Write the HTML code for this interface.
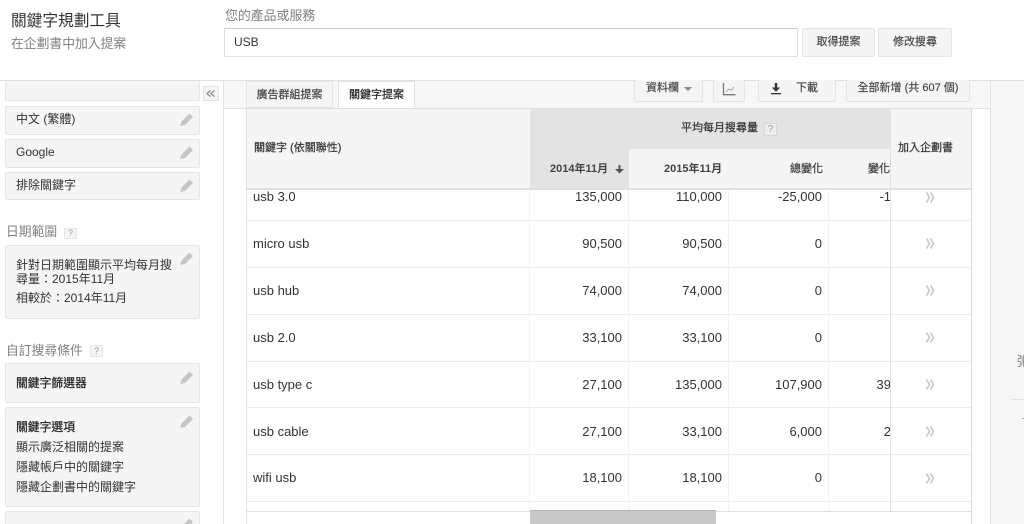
<!DOCTYPE html>
<html><head><meta charset="utf-8">
<style>
html,body{margin:0;padding:0;width:1024px;height:524px;overflow:hidden;background:#fff}
#w{position:relative;width:1024px;height:524px;overflow:hidden;font-family:"Liberation Sans","Noto Sans CJK TC",sans-serif;color:#333;font-size:12px;filter:blur(.35px)}
#w div{position:absolute;box-sizing:border-box;white-space:nowrap}
.card{left:5px;width:195px;background:#f5f5f5;border:1px solid #e6e6e6;border-radius:2px}
.t{line-height:16px}
.btn{background:#f5f5f5;border:1px solid #e4e4e4;border-radius:2px;text-align:center;color:#444;font-size:11px;-webkit-text-stroke:.15px #444}
.tb{top:80px;height:22px;border-top:0;line-height:17px}
.hl{height:1px;left:247px;width:724px;background:#ececec}
.vl{width:1px;background:#f2f2f2}
.n{text-align:right;font-size:13px;line-height:16px;color:#333}
.k{left:253px;font-size:13px;line-height:16px;color:#333}
.h{font-size:11px;line-height:14px;color:#333;-webkit-text-stroke:.2px #333}
svg{position:absolute}
</style></head><body><div id="w">

<div class="t" style="left:11px;top:12px;font-size:15.700px;line-height:20px;color:#333">關鍵字規劃工具</div>
<div class="t" style="left:11px;top:36px;font-size:12.800px;color:#808080">在企劃書中加入提案</div>
<div class="t" style="left:225px;top:8px;font-size:12.900px;color:#808080">您的產品或服務</div>
<div style="left:224px;top:28px;width:574px;height:29px;border:1px solid #dedede;border-top-color:#cdcdcd;font-size:12px;line-height:27px;padding-left:9px;color:#333">USB</div>
<div class="btn" style="left:802px;top:28px;width:73px;height:29px;line-height:27px">取得提案</div>
<div class="btn" style="left:878px;top:28px;width:74px;height:29px;line-height:27px">修改搜尋</div>

<div style="left:0;top:80px;width:1024px;height:1px;background:#e0e0e0"></div>

<div class="card" style="top:81px;height:20px;border-top:0"></div>
<div class="card t" style="top:106px;height:29px;line-height:24px;padding-left:10px">中文 (繁體)</div>
<div class="card t" style="top:139px;height:29px;line-height:24px;padding-left:10px">Google</div>
<div class="card t" style="top:172px;height:28px;line-height:24px;padding-left:10px">排除關鍵字</div>

<div class="t" style="left:6px;top:224px;font-size:12.800px;color:#808080">日期範圍</div>
<div style="left:64px;top:228px;width:13px;height:11px;background:#f5f5f5;border:1px solid #e6e6e6;font-size:9px;line-height:9px;text-align:center;color:#999">?</div>
<div class="card" style="top:245px;height:74px"></div>
<div class="t" style="left:16px;top:258px;font-size:12px;line-height:14px;color:#333">針對日期範圍顯示平均每月搜<br>尋量：2015年11月</div>
<div class="t" style="left:16px;top:291px;font-size:12px;line-height:14px;color:#333">相較於：2014年11月</div>

<div class="t" style="left:6px;top:343px;font-size:12.800px;color:#808080">自訂搜尋條件</div>
<div style="left:90px;top:345px;width:13px;height:12px;background:#f5f5f5;border:1px solid #e6e6e6;font-size:9px;line-height:10px;text-align:center;color:#999">?</div>
<div class="card" style="top:363px;height:40px"></div>
<div class="t" style="left:16px;top:375px;font-size:11.800px;color:#222;-webkit-text-stroke:.2px #222">關鍵字篩選器</div>
<div class="card" style="top:407px;height:100px"></div>
<div class="t" style="left:16px;top:419px;font-size:11.800px;color:#222;-webkit-text-stroke:.2px #222">關鍵字選項</div>
<div class="t" style="left:16px;top:439px">顯示廣泛相關的提案</div>
<div class="t" style="left:16px;top:459px">隱藏帳戶中的關鍵字</div>
<div class="t" style="left:16px;top:479px">隱藏企劃書中的關鍵字</div>
<div class="card" style="top:511px;height:20px"></div>

<svg width="200" height="535" style="left:0;top:0" fill="#c6c6c6">
<path d="M180 126l1.500-4.500 8-8 3.500 3.500-8 8z"/>
<path d="M180 159l1.500-4.500 8-8 3.500 3.500-8 8z"/>
<path d="M180 192l1.500-4.500 8-8 3.500 3.500-8 8z"/>
<path d="M180 265l1.500-4.500 8-8 3.500 3.500-8 8z"/>
<path d="M180 384l1.500-4.500 8-8 3.500 3.500-8 8z"/>
<path d="M180 428l1.500-4.500 8-8 3.500 3.500-8 8z"/>
<path d="M180 531l1.500-4.500 8-8 3.500 3.500-8 8z"/>
</svg>

<div style="left:203px;top:86px;width:16px;height:15px;background:#f5f5f5;border:1px solid #e2e2e2"></div>
<svg width="10" height="8" style="left:206px;top:90px" fill="none" stroke="#888" stroke-width="1.200"><path d="M4.500 .5L1 3.500l3.500 3M8.500 .5L5 3.500l3.500 3"/></svg>
<div style="left:223px;top:81px;width:1px;height:443px;background:#e3e3e3"></div>

<div style="left:990px;top:81px;width:34px;height:443px;background:#f6f6f6;border-left:1px solid #e4e4e4"></div>
<div style="left:1017px;top:354px;font-size:13px;color:#888;line-height:16px">粥</div>
<div style="left:1011px;top:399px;width:13px;height:1px;background:#e2e2e2"></div>
<div style="left:1022px;top:418px;width:2px;height:1px;background:#aaa"></div>

<div style="left:224px;top:81px;width:766px;height:28px;background:#f7f7f7;border-bottom:1px solid #e2e2e2"></div>
<div style="left:246px;top:81px;width:87px;height:27px;background:#f5f5f5;border:1px solid #e4e4e4;text-align:center;line-height:27px;font-size:11px;color:#444;-webkit-text-stroke:.2px #444">廣告群組提案</div>
<div style="left:338px;top:81px;width:77px;height:28px;background:#fff;border:1px solid #e2e2e2;border-bottom:0;text-align:center;line-height:27px;font-size:11px;color:#222;-webkit-text-stroke:.2px #222">關鍵字提案</div>

<div class="btn tb" style="left:634px;width:69px;text-align:left;padding-left:11px">資料欄</div>
<div style="left:684px;top:87px;width:0;height:0;border:4px solid transparent;border-top:4px solid #888"></div>
<div class="btn tb" style="left:713px;width:32px"></div>
<svg width="16" height="16" style="left:722px;top:82px" fill="none"><path d="M1.500 1v11.700h12" stroke="#777" stroke-width="1.300"/><path d="M4 10l3-3 2 1.500 3-3.500" stroke="#aaa"/></svg>
<div class="btn tb" style="left:758px;width:78px;padding-left:20px">下載</div>
<svg width="14" height="14" style="left:770px;top:83px" fill="#333"><path d="M4.800 0h2.400v4.500h3l-4.200 4.300-4.200-4.300h3z"/><rect x="1" y="10" width="10" height="1.300"/></svg>
<div class="btn tb" style="left:846px;width:124px">全部新增 (共 607 個)</div>

<div style="left:246px;top:108px;width:726px;height:416px;background:#fff"></div>
<div style="left:246px;top:108px;width:1px;height:416px;background:#e2e2e2"></div>
<div style="left:971px;top:108px;width:1px;height:416px;background:#d8d8d8"></div>

<div class="hl" style="top:220px"></div><div class="hl" style="top:267px"></div><div class="hl" style="top:314px"></div><div class="hl" style="top:361px"></div><div class="hl" style="top:407px"></div><div class="hl" style="top:454px"></div><div class="hl" style="top:501px"></div>
<div class="vl" style="left:529px;top:190px;height:321px"></div>
<div class="vl" style="left:628px;top:190px;height:321px"></div>
<div class="vl" style="left:728px;top:190px;height:321px"></div>
<div class="vl" style="left:828px;top:190px;height:321px"></div>

<div class="k" style="top:189px">usb 3.0</div>
<div class="n" style="left:530px;width:92px;top:189px">135,000</div><div class="n" style="left:630px;width:92px;top:189px">110,000</div><div class="n" style="left:730px;width:92px;top:189px">-25,000</div><div class="n" style="left:830px;width:61px;top:189px">-1</div>
<div class="k" style="top:236px">micro usb</div>
<div class="n" style="left:530px;width:92px;top:236px">90,500</div><div class="n" style="left:630px;width:92px;top:236px">90,500</div><div class="n" style="left:730px;width:92px;top:236px">0</div>
<div class="k" style="top:283px">usb hub</div>
<div class="n" style="left:530px;width:92px;top:283px">74,000</div><div class="n" style="left:630px;width:92px;top:283px">74,000</div><div class="n" style="left:730px;width:92px;top:283px">0</div>
<div class="k" style="top:330px">usb 2.0</div>
<div class="n" style="left:530px;width:92px;top:330px">33,100</div><div class="n" style="left:630px;width:92px;top:330px">33,100</div><div class="n" style="left:730px;width:92px;top:330px">0</div>
<div class="k" style="top:377px">usb type c</div>
<div class="n" style="left:530px;width:92px;top:377px">27,100</div><div class="n" style="left:630px;width:92px;top:377px">135,000</div><div class="n" style="left:730px;width:92px;top:377px">107,900</div><div class="n" style="left:830px;width:61px;top:377px">39</div>
<div class="k" style="top:424px">usb cable</div>
<div class="n" style="left:530px;width:92px;top:424px">27,100</div><div class="n" style="left:630px;width:92px;top:424px">33,100</div><div class="n" style="left:730px;width:92px;top:424px">6,000</div><div class="n" style="left:830px;width:61px;top:424px">2</div>
<div class="k" style="top:470px">wifi usb</div>
<div class="n" style="left:530px;width:92px;top:470px">18,100</div><div class="n" style="left:630px;width:92px;top:470px">18,100</div><div class="n" style="left:730px;width:92px;top:470px">0</div>

<svg width="12" height="330" style="left:925px;top:190px" fill="none" stroke="#cccccc" stroke-width="1.800">
<path d="M1.500 2.500l3 5-3 5M5.500 2.500l3 5-3 5"/>
<path d="M1.500 48.500l3 5-3 5M5.500 48.500l3 5-3 5"/>
<path d="M1.500 95.500l3 5-3 5M5.500 95.500l3 5-3 5"/>
<path d="M1.500 142.500l3 5-3 5M5.500 142.500l3 5-3 5"/>
<path d="M1.500 189.500l3 5-3 5M5.500 189.500l3 5-3 5"/>
<path d="M1.500 236.500l3 5-3 5M5.500 236.500l3 5-3 5"/>
<path d="M1.500 283.500l3 5-3 5M5.500 283.500l3 5-3 5"/>
</svg>

<div style="left:890px;top:190px;width:1px;height:321px;background:#e0e0e0"></div>

<div style="left:247px;top:108px;width:724px;height:82px;background:#f5f5f5;border-bottom:2px solid #e0e0e0"></div>
<div style="left:530px;top:108px;width:360px;height:41px;background:#e3e3e3"></div>
<div style="left:530px;top:149px;width:99px;height:39px;background:#e3e3e3"></div>
<div style="left:890px;top:108px;width:1px;height:82px;background:#e2e2e2"></div>
<div style="left:246px;top:108px;width:726px;height:1px;background:#dedede"></div>
<div class="h" style="left:254px;top:141px">關鍵字 (依關聯性)</div>
<div class="h" style="left:681px;top:121px">平均每月搜尋量</div>
<div style="left:764px;top:123px;width:13px;height:13px;background:#eee;border:1px solid #d8d8d8;font-size:10px;line-height:11px;text-align:center;color:#999">?</div>
<div class="h" style="left:550px;top:162px;font-weight:bold;color:#444;-webkit-text-stroke:0">2014年11月</div>
<svg width="10" height="10" style="left:615px;top:165px" fill="#555"><path d="M3.500 0h2v4h3.500l-4.500 4.500-4.500-4.500h3.500z"/></svg>
<div class="h" style="left:664px;top:162px;font-weight:bold;color:#444;-webkit-text-stroke:0">2015年11月</div>
<div class="h" style="left:790px;top:162px;color:#444">總變化</div>
<div class="h" style="left:868px;top:162px;width:23px;overflow:hidden;color:#444">變化百</div>
<div class="h" style="left:898px;top:141px">加入企劃書</div>

<div style="left:247px;top:511px;width:724px;height:1px;background:#dedede"></div>
<div style="left:530px;top:510px;width:186px;height:14px;background:#c8c8c8;border-top:1px solid #b4b4b4"></div>

</div></body></html>
